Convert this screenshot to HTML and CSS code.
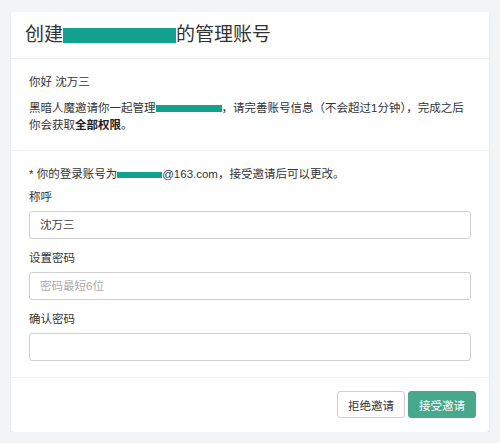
FILE: index.html
```html
<!DOCTYPE html>
<html lang="zh">
<head>
<meta charset="utf-8">
<link rel="stylesheet" href="styles.css">
</head>
<body>
<div class="card">
  <div class="header">
    <h1 class="title">创建<span class="redact redact-title"></span>的管理账号</h1>
  </div>
  <div class="section intro">
    <p class="hello">你好 沈万三</p>
    <p class="desc">黑暗人魔邀请你一起管理<span class="redact redact-shop"></span>，请完善账号信息（不会超过1分钟），完成之后你会获取<b>全部权限</b>。</p>
  </div>
  <div class="section form">
    <p class="notice">* 你的登录账号为<span class="redact redact-mail"></span>@163.com，接受邀请后可以更改。</p>
    <div class="group">
      <label class="label">称呼</label>
      <div class="input">沈万三</div>
    </div>
    <div class="group">
      <label class="label">设置密码</label>
      <div class="input placeholder">密码最短6位</div>
    </div>
    <div class="group">
      <label class="label">确认密码</label>
      <div class="input"></div>
    </div>
  </div>
  <div class="footer">
    <button class="btn btn-default">拒绝邀请</button>
    <button class="btn btn-primary">接受邀请</button>
  </div>
</div>
</body>
</html>
```

FILE: styles.css
```css
html, body {
  margin: 0;
  padding: 0;
  background: #f2f4f5;
}
body {
  padding: 12px 11px 0;
  font-family: "Liberation Sans", "Noto Sans CJK SC", sans-serif;
  color: #333;
  font-size: 11.5px;
}
.card {
  background: #fff;
  border-radius: 3px;
  box-shadow: 0 1px 2px rgba(0, 0, 0, 0.12);
}
.header {
  height: 46px;
  display: flex;
  align-items: center;
  padding-left: 14px;
  border-bottom: 1px solid #eceeef;
}
.title {
  margin: 0;
  font-size: 19px;
  font-weight: normal;
  line-height: 24px;
  color: #333;
  display: flex;
  align-items: center;
}
.redact {
  display: inline-block;
  background: #12a08f;
}
.redact-title {
  width: 113px;
  height: 15px;
}
.redact-shop {
  width: 66px;
  height: 7px;
  vertical-align: middle;
}
.redact-mail {
  width: 45px;
  height: 6px;
  vertical-align: middle;
}
.section {
  padding: 0 18px;
  border-bottom: 1px solid #eceeef;
}
.intro {
  padding-top: 15px;
  padding-bottom: 16px;
}
p {
  margin: 0;
  line-height: 17px;
}
.desc {
  margin-top: 9px;
}
.desc b {
  font-weight: bold;
  color: #222;
}
.form {
  padding-top: 15px;
  padding-bottom: 16px;
}
.notice {
  margin-bottom: 6px;
}
.group {
  display: flex;
  flex-direction: column;
  gap: 5px;
}
.group + .group {
  margin-top: 11px;
}
.label {
  line-height: 17px;
}
.input {
  height: 28px;
  box-sizing: border-box;
  border: 1px solid #d0d0d0;
  border-radius: 3px;
  padding: 0 10px;
  line-height: 26px;
  color: #444;
}
.placeholder {
  color: #aaa;
}
.footer {
  display: flex;
  justify-content: flex-end;
  gap: 3px;
  padding: 13px 13px 14px;
}
.btn {
  width: 68px;
  height: 27px;
  border-radius: 3px;
  font-family: inherit;
  font-size: 11.5px;
  padding: 0;
  cursor: pointer;
}
.btn-default {
  background: #fff;
  border: 1px solid #d0d0d0;
  color: #333;
}
.btn-primary {
  background: #47a98b;
  border: 1px solid #47a98b;
  color: #fff;
}
```
